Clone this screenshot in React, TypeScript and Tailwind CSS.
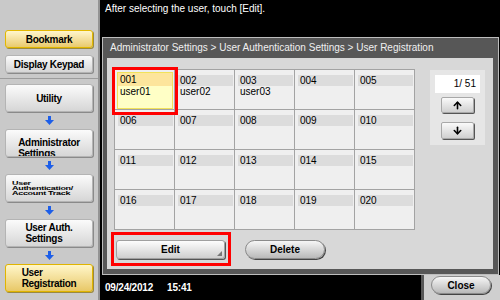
import { ArrowUp, ArrowDown } from 'lucide-react';

const cells = [
  { no: '001', name: 'user01' },
  { no: '002', name: 'user02' },
  { no: '003', name: 'user03' },
  ...Array.from({ length: 17 }, (_, i) => ({ no: String(i + 4).padStart(3, '0'), name: '' })),
];

const BlueArrow = () => (
  <svg width="9" height="9" viewBox="0 0 9 9">
    <rect x="3" y="0" width="3" height="4.5" fill="#1d5ee8" />
    <polygon points="0,4 9,4 4.5,9" fill="#1d5ee8" />
  </svg>
);

const SideButton = ({ children, yellow = false }: { children: React.ReactNode; yellow?: boolean }) => (
  <div
    className={`h-[28px] rounded-[3px] border flex items-center justify-center overflow-hidden ${
      yellow
        ? 'bg-gradient-to-b from-[#fff6c8] to-[#e8c866] border-[#e0b400] shadow-[1px_1px_0_#9a8a40]'
        : 'bg-gradient-to-b from-[#fbfbfb] to-[#d6d6d6] border-[#b4b4b4] shadow-[1px_1px_0_#8a8a8a]'
    }`}
  >
    {children}
  </div>
);

const Arrow = () => (
  <div className="h-[17px] flex items-center justify-center">
    <BlueArrow />
  </div>
);

export default function App() {
  return (
    <div className="w-[500px] h-[300px] flex bg-black overflow-hidden font-['Liberation_Sans',Arial,sans-serif] text-[10px] text-black">
      {/* sidebar */}
      <div className="w-[100px] bg-[#c9c9c9] border-r-2 border-[#939393] flex flex-col">
        <div className="h-[79px] border-b border-[#9c9c9c] px-[5px] pt-[30px] flex flex-col gap-[7px] font-bold tracking-[-0.3px]">
          <div className="h-[18px] rounded-[3px] border border-[#e3b800] bg-gradient-to-b from-[#fff6cc] to-[#e9ca6c] shadow-[1px_1px_0_#9a8a40] flex items-center justify-center">
            Bookmark
          </div>
          <div className="h-[18px] rounded-[3px] border border-[#b4b4b4] bg-gradient-to-b from-[#fbfbfb] to-[#d6d6d6] shadow-[1px_1px_0_#8a8a8a] flex items-center justify-center">
            Display Keypad
          </div>
        </div>
        <div className="px-[5px] pt-[5px] flex flex-col font-bold tracking-[-0.3px]">
          <SideButton>Utility</SideButton>
          <Arrow />
          <SideButton>
            <div className="leading-[11px] pt-[9px]">
              Administrator
              <br />
              Settings
            </div>
          </SideButton>
          <Arrow />
          <SideButton>
            <div className="w-full pl-[6px] text-[9px] leading-[9px] tracking-[-0.3px] scale-y-[0.6] origin-center">
              User
              <br />
              Authentication/
              <br />
              Account Track
            </div>
          </SideButton>
          <Arrow />
          <SideButton>
            <div className="leading-[11px]">
              User Auth.
              <br />
              Settings
            </div>
          </SideButton>
          <Arrow />
          <SideButton yellow>
            <div className="leading-[11px]">
              User
              <br />
              Registration
            </div>
          </SideButton>
        </div>
      </div>

      {/* main */}
      <div className="w-[400px] flex flex-col">
        <div className="h-[37px] pl-[5px] pt-[3px] text-white leading-[12px]">
          After selecting the user, touch [Edit].
        </div>

        <div className="ml-[2px] mr-[1px] h-[238px] border border-[#bdbdbd] bg-[#575757] flex flex-col">
          <div className="h-[20px] pl-[7px] leading-[20px] text-[#f0f0f0]">
            Administrator Settings &gt; User Authentication Settings &gt; User Registration
          </div>
          <div className="ml-[4px] mr-[5px] mb-[5px] flex-1 bg-[#d8d8d8] pl-[7px] pt-[11px]">
            <div className="flex">
              <div className="grid grid-cols-[repeat(5,59px)] grid-rows-[repeat(4,39px)] gap-px p-px bg-[#a3a3a3]">
                {cells.map((c, i) =>
                  i === 0 ? (
                    <div key={c.no} className="relative bg-[#efefef]">
                      <div className="absolute left-[2px] top-[2px] right-[1px] bottom-0 bg-[#ffffc6] border border-[#f2e25a]">
                        <div className="bg-[#fde59c] h-[13px] pl-[2px] leading-[13px]">{c.no}</div>
                        <div className="pl-[2px] leading-[11px]">{c.name}</div>
                      </div>
                      <div className="absolute -left-[3px] -top-[3px] w-[66px] h-[48px] border-[3px] border-[#ff0000]" />
                    </div>
                  ) : (
                    <div key={c.no} className="bg-[#efefef]">
                      <div className="mt-[5px] ml-[3px] mr-[1px] h-[11px] bg-[#dcdcdc] pl-[2px] leading-[11px]">{c.no}</div>
                      {c.name && <div className="pl-[5px] leading-[12px]">{c.name}</div>}
                    </div>
                  )
                )}
              </div>

              <div className="ml-[15px] mt-[1px] w-[55px] h-[75px] bg-[#e6e6e6] pt-[5px] flex flex-col">
                <div className="mx-[5px] h-[18px] bg-white text-right pr-[4px] leading-[18px]">1/ 51</div>
                <div className="ml-[11px] mt-[4px] w-[33px] h-[16px] rounded-[2px] bg-gradient-to-b from-[#fafafa] to-[#d0d0d0] border border-[#a8a8a8] shadow-[1px_1px_0_#555] flex items-center justify-center">
                  <ArrowUp size={11} strokeWidth={3.5} color="#000" />
                </div>
                <div className="ml-[11px] mt-[9px] w-[33px] h-[17px] rounded-[2px] bg-gradient-to-b from-[#fafafa] to-[#d0d0d0] border border-[#a8a8a8] shadow-[1px_1px_0_#555] flex items-center justify-center">
                  <ArrowDown size={11} strokeWidth={3.5} color="#000" />
                </div>
              </div>
            </div>

            <div className="flex items-center mt-[10px] pl-[2px] font-bold">
              <div className="relative">
                <div className="w-[109px] h-[19px] rounded-[3px] bg-gradient-to-b from-[#fdfdfd] to-[#cfcfcf] border border-[#a0a0a0] shadow-[1px_1px_0_#555] flex items-center justify-center relative">
                  Edit
                  <svg className="absolute right-[2px] bottom-[2px]" width="5" height="5" viewBox="0 0 5 5">
                    <polygon points="5,0 5,5 0,5" fill="#777" />
                  </svg>
                </div>
                <div className="absolute -left-[5px] -top-[8px] w-[120px] h-[34px] border-[3px] border-[#ff0000]" />
              </div>
              <div className="ml-[20px] w-[80px] h-[19px] rounded-full bg-gradient-to-b from-[#f6f6f6] to-[#b9b9b9] border border-[#8a8a8a] shadow-[1px_1px_0_#444] flex items-center justify-center">
                Delete
              </div>
            </div>
          </div>
        </div>

        <div className="flex-1 flex">
          <div className="flex-1 flex items-center pl-[5px] text-white font-bold tracking-[-0.2px]">
            <span>09/24/2012</span>
            <span className="ml-[14px]">15:41</span>
          </div>
          <div className="w-[79px] bg-[#cfcfcf] border-l-[3px] border-[#575757] pl-[7px] pt-px">
            <div className="w-[60px] h-[18px] rounded-full bg-gradient-to-b from-[#f6f6f6] to-[#b9b9b9] border border-[#8a8a8a] shadow-[1px_1px_0_#444] flex items-center justify-center font-bold">
              Close
            </div>
          </div>
        </div>
      </div>
    </div>
  );
}
